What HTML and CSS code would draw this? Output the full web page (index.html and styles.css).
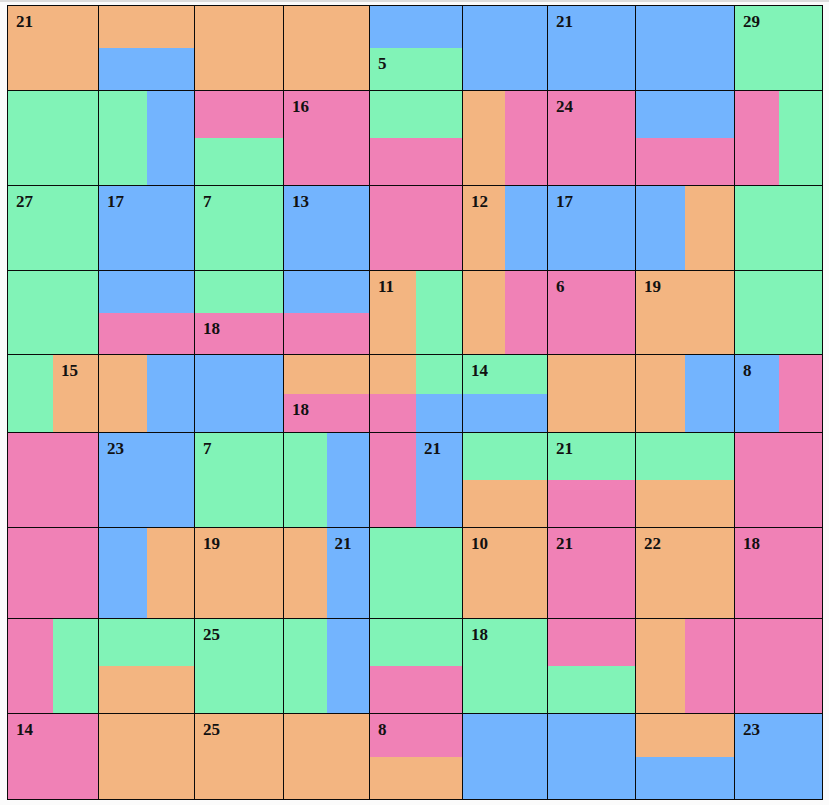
FILE: index.html
```html
<!DOCTYPE html>
<html lang="en">
<head>
<meta charset="utf-8">
<title>Killer Sudoku</title>
<link rel="stylesheet" href="styles.css">
</head>
<body>
<div class="strip"></div>
<div class="board">
<!-- row 0 -->
<div class="cell"><span class="q o"><span class="lbl">21</span></span><span class="q o"></span><span class="q o"></span><span class="q o"></span></div>
<div class="cell"><span class="q o"></span><span class="q o"></span><span class="q b"></span><span class="q b"></span></div>
<div class="cell"><span class="q o"></span><span class="q o"></span><span class="q o"></span><span class="q o"></span></div>
<div class="cell"><span class="q o"></span><span class="q o"></span><span class="q o"></span><span class="q o"></span></div>
<div class="cell"><span class="q b"></span><span class="q b"></span><span class="q g"><span class="lbl">5</span></span><span class="q g"></span></div>
<div class="cell"><span class="q b"></span><span class="q b"></span><span class="q b"></span><span class="q b"></span></div>
<div class="cell"><span class="q b"><span class="lbl">21</span></span><span class="q b"></span><span class="q b"></span><span class="q b"></span></div>
<div class="cell"><span class="q b"></span><span class="q b"></span><span class="q b"></span><span class="q b"></span></div>
<div class="cell"><span class="q g"><span class="lbl">29</span></span><span class="q g"></span><span class="q g"></span><span class="q g"></span></div>
<!-- row 1 -->
<div class="cell"><span class="q g"></span><span class="q g"></span><span class="q g"></span><span class="q g"></span></div>
<div class="cell"><span class="q g"></span><span class="q b"></span><span class="q g"></span><span class="q b"></span></div>
<div class="cell"><span class="q p"></span><span class="q p"></span><span class="q g"></span><span class="q g"></span></div>
<div class="cell"><span class="q p"><span class="lbl">16</span></span><span class="q p"></span><span class="q p"></span><span class="q p"></span></div>
<div class="cell"><span class="q g"></span><span class="q g"></span><span class="q p"></span><span class="q p"></span></div>
<div class="cell"><span class="q o"></span><span class="q p"></span><span class="q o"></span><span class="q p"></span></div>
<div class="cell"><span class="q p"><span class="lbl">24</span></span><span class="q p"></span><span class="q p"></span><span class="q p"></span></div>
<div class="cell"><span class="q b"></span><span class="q b"></span><span class="q p"></span><span class="q p"></span></div>
<div class="cell"><span class="q p"></span><span class="q g"></span><span class="q p"></span><span class="q g"></span></div>
<!-- row 2 -->
<div class="cell"><span class="q g"><span class="lbl">27</span></span><span class="q g"></span><span class="q g"></span><span class="q g"></span></div>
<div class="cell"><span class="q b"><span class="lbl">17</span></span><span class="q b"></span><span class="q b"></span><span class="q b"></span></div>
<div class="cell"><span class="q g"><span class="lbl">7</span></span><span class="q g"></span><span class="q g"></span><span class="q g"></span></div>
<div class="cell"><span class="q b"><span class="lbl">13</span></span><span class="q b"></span><span class="q b"></span><span class="q b"></span></div>
<div class="cell"><span class="q p"></span><span class="q p"></span><span class="q p"></span><span class="q p"></span></div>
<div class="cell"><span class="q o"><span class="lbl">12</span></span><span class="q b"></span><span class="q o"></span><span class="q b"></span></div>
<div class="cell"><span class="q b"><span class="lbl">17</span></span><span class="q b"></span><span class="q b"></span><span class="q b"></span></div>
<div class="cell"><span class="q b"></span><span class="q o"></span><span class="q b"></span><span class="q o"></span></div>
<div class="cell"><span class="q g"></span><span class="q g"></span><span class="q g"></span><span class="q g"></span></div>
<!-- row 3 -->
<div class="cell"><span class="q g"></span><span class="q g"></span><span class="q g"></span><span class="q g"></span></div>
<div class="cell"><span class="q b"></span><span class="q b"></span><span class="q p"></span><span class="q p"></span></div>
<div class="cell"><span class="q g"></span><span class="q g"></span><span class="q p"><span class="lbl">18</span></span><span class="q p"></span></div>
<div class="cell"><span class="q b"></span><span class="q b"></span><span class="q p"></span><span class="q p"></span></div>
<div class="cell"><span class="q o"><span class="lbl">11</span></span><span class="q g"></span><span class="q o"></span><span class="q g"></span></div>
<div class="cell"><span class="q o"></span><span class="q p"></span><span class="q o"></span><span class="q p"></span></div>
<div class="cell"><span class="q p"><span class="lbl">6</span></span><span class="q p"></span><span class="q p"></span><span class="q p"></span></div>
<div class="cell"><span class="q o"><span class="lbl">19</span></span><span class="q o"></span><span class="q o"></span><span class="q o"></span></div>
<div class="cell"><span class="q g"></span><span class="q g"></span><span class="q g"></span><span class="q g"></span></div>
<!-- row 4 -->
<div class="cell"><span class="q g"></span><span class="q o"><span class="lbl">15</span></span><span class="q g"></span><span class="q o"></span></div>
<div class="cell"><span class="q o"></span><span class="q b"></span><span class="q o"></span><span class="q b"></span></div>
<div class="cell"><span class="q b"></span><span class="q b"></span><span class="q b"></span><span class="q b"></span></div>
<div class="cell"><span class="q o"></span><span class="q o"></span><span class="q p"><span class="lbl">18</span></span><span class="q p"></span></div>
<div class="cell"><span class="q o"></span><span class="q g"></span><span class="q p"></span><span class="q b"></span></div>
<div class="cell"><span class="q g"><span class="lbl">14</span></span><span class="q g"></span><span class="q b"></span><span class="q b"></span></div>
<div class="cell"><span class="q o"></span><span class="q o"></span><span class="q o"></span><span class="q o"></span></div>
<div class="cell"><span class="q o"></span><span class="q b"></span><span class="q o"></span><span class="q b"></span></div>
<div class="cell"><span class="q b"><span class="lbl">8</span></span><span class="q p"></span><span class="q b"></span><span class="q p"></span></div>
<!-- row 5 -->
<div class="cell"><span class="q p"></span><span class="q p"></span><span class="q p"></span><span class="q p"></span></div>
<div class="cell"><span class="q b"><span class="lbl">23</span></span><span class="q b"></span><span class="q b"></span><span class="q b"></span></div>
<div class="cell"><span class="q g"><span class="lbl">7</span></span><span class="q g"></span><span class="q g"></span><span class="q g"></span></div>
<div class="cell"><span class="q g"></span><span class="q b"></span><span class="q g"></span><span class="q b"></span></div>
<div class="cell"><span class="q p"></span><span class="q b"><span class="lbl">21</span></span><span class="q p"></span><span class="q b"></span></div>
<div class="cell"><span class="q g"></span><span class="q g"></span><span class="q o"></span><span class="q o"></span></div>
<div class="cell"><span class="q g"><span class="lbl">21</span></span><span class="q g"></span><span class="q p"></span><span class="q p"></span></div>
<div class="cell"><span class="q g"></span><span class="q g"></span><span class="q o"></span><span class="q o"></span></div>
<div class="cell"><span class="q p"></span><span class="q p"></span><span class="q p"></span><span class="q p"></span></div>
<!-- row 6 -->
<div class="cell"><span class="q p"></span><span class="q p"></span><span class="q p"></span><span class="q p"></span></div>
<div class="cell"><span class="q b"></span><span class="q o"></span><span class="q b"></span><span class="q o"></span></div>
<div class="cell"><span class="q o"><span class="lbl">19</span></span><span class="q o"></span><span class="q o"></span><span class="q o"></span></div>
<div class="cell"><span class="q o"></span><span class="q b"><span class="lbl">21</span></span><span class="q o"></span><span class="q b"></span></div>
<div class="cell"><span class="q g"></span><span class="q g"></span><span class="q g"></span><span class="q g"></span></div>
<div class="cell"><span class="q o"><span class="lbl">10</span></span><span class="q o"></span><span class="q o"></span><span class="q o"></span></div>
<div class="cell"><span class="q p"><span class="lbl">21</span></span><span class="q p"></span><span class="q p"></span><span class="q p"></span></div>
<div class="cell"><span class="q o"><span class="lbl">22</span></span><span class="q o"></span><span class="q o"></span><span class="q o"></span></div>
<div class="cell"><span class="q p"><span class="lbl">18</span></span><span class="q p"></span><span class="q p"></span><span class="q p"></span></div>
<!-- row 7 -->
<div class="cell"><span class="q p"></span><span class="q g"></span><span class="q p"></span><span class="q g"></span></div>
<div class="cell"><span class="q g"></span><span class="q g"></span><span class="q o"></span><span class="q o"></span></div>
<div class="cell"><span class="q g"><span class="lbl">25</span></span><span class="q g"></span><span class="q g"></span><span class="q g"></span></div>
<div class="cell"><span class="q g"></span><span class="q b"></span><span class="q g"></span><span class="q b"></span></div>
<div class="cell"><span class="q g"></span><span class="q g"></span><span class="q p"></span><span class="q p"></span></div>
<div class="cell"><span class="q g"><span class="lbl">18</span></span><span class="q g"></span><span class="q g"></span><span class="q g"></span></div>
<div class="cell"><span class="q p"></span><span class="q p"></span><span class="q g"></span><span class="q g"></span></div>
<div class="cell"><span class="q o"></span><span class="q p"></span><span class="q o"></span><span class="q p"></span></div>
<div class="cell"><span class="q p"></span><span class="q p"></span><span class="q p"></span><span class="q p"></span></div>
<!-- row 8 -->
<div class="cell"><span class="q p"><span class="lbl">14</span></span><span class="q p"></span><span class="q p"></span><span class="q p"></span></div>
<div class="cell"><span class="q o"></span><span class="q o"></span><span class="q o"></span><span class="q o"></span></div>
<div class="cell"><span class="q o"><span class="lbl">25</span></span><span class="q o"></span><span class="q o"></span><span class="q o"></span></div>
<div class="cell"><span class="q o"></span><span class="q o"></span><span class="q o"></span><span class="q o"></span></div>
<div class="cell"><span class="q p"><span class="lbl">8</span></span><span class="q p"></span><span class="q o"></span><span class="q o"></span></div>
<div class="cell"><span class="q b"></span><span class="q b"></span><span class="q b"></span><span class="q b"></span></div>
<div class="cell"><span class="q b"></span><span class="q b"></span><span class="q b"></span><span class="q b"></span></div>
<div class="cell"><span class="q o"></span><span class="q o"></span><span class="q b"></span><span class="q b"></span></div>
<div class="cell"><span class="q b"><span class="lbl">23</span></span><span class="q b"></span><span class="q b"></span><span class="q b"></span></div>
</div>
</body>
</html>
```

FILE: styles.css
```css
html, body {
  margin: 0;
  padding: 0;
  background: #fbfbfb;
}

.strip {
  height: 2px;
  background: #dcdcdc;
}

.board {
  display: grid;
  grid-template-columns: 90px 95px 88px 85px 92px 84px 87px 98px 87px;
  grid-template-rows: 84px 94px 84px 83px 77px 94px 90px 94px 85px;
  gap: 1px;
  padding: 1px;
  background: #0a0a0a;
  width: max-content;
  margin: 3px 0 0 7px;
}

.cell {
  display: grid;
  grid-template-columns: 1fr 1fr;
  grid-template-rows: 1fr 1fr;
  min-width: 0;
  min-height: 0;
}

.q {
  display: block;
  min-width: 0;
  min-height: 0;
}

.o { background: #f3b581; }
.b { background: #73b4fe; }
.g { background: #81f3b7; }
.p { background: #f081b6; }

.lbl {
  display: block;
  padding: 7px 0 0 8px;
  font-family: "Liberation Serif", "Times New Roman", serif;
  font-weight: bold;
  font-size: 17px;
  line-height: 17px;
  color: #111;
  white-space: nowrap;
}
```
